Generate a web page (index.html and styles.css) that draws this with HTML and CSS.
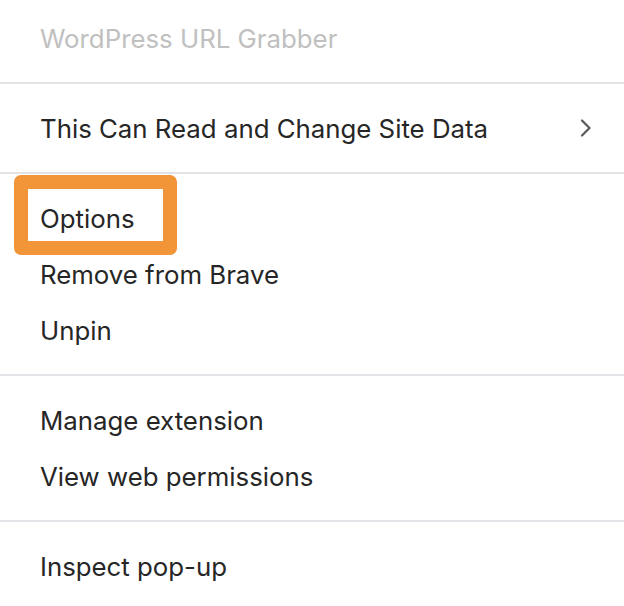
FILE: index.html
```html
<!DOCTYPE html>
<html>
<head>
<meta charset="utf-8">
<link rel="stylesheet" href="styles.css">
</head>
<body>
<div class="menu">
  <div class="row title">WordPress URL Grabber</div>
  <div class="sep"></div>
  <div class="row">
    <span class="label">This Can Read and Change Site Data</span>
    <svg class="chev" width="12" height="18" viewBox="0 0 12 18"><path d="M2 1.5 L9.5 9 L2 16.5" fill="none" stroke="#5a5a5a" stroke-width="2.2" stroke-linecap="round" stroke-linejoin="round"/></svg>
  </div>
  <div class="sep"></div>
  <div class="row highlight">
    <span class="label">Options</span>
    <span class="mark"></span>
  </div>
  <div class="row"><span class="label">Remove from Brave</span></div>
  <div class="row"><span class="label">Unpin</span></div>
  <div class="sep"></div>
  <div class="row"><span class="label">Manage extension</span></div>
  <div class="row"><span class="label">View web permissions</span></div>
  <div class="sep"></div>
  <div class="row"><span class="label">Inspect pop-up</span></div>
</div>
</body>
</html>
```
FILE: styles.css
```css
html, body {
  margin: 0;
  padding: 0;
  background: #ffffff;
}
body {
  font-family: Inter, "Noto Sans", "Liberation Sans", sans-serif;
  font-size: 25.8px;
  color: #262626;
  width: 624px;
  height: 606px;
  overflow: hidden;
}
.menu {
  padding-top: 12px;
  display: flex;
  flex-direction: column;
}
.row {
  position: relative;
  box-sizing: border-box;
  height: 56px;
  display: flex;
  align-items: center;
  justify-content: space-between;
  padding: 0 32px 4px 40px;
}
.title {
  color: #c0c0c0;
}
.sep {
  height: 2px;
  background: #e3e2e7;
  margin: 14px 0 18px;
}
.chev {
  display: block;
}
.mark {
  position: absolute;
  left: 14px;
  top: -17px;
  width: 163px;
  height: 80px;
  box-sizing: border-box;
  border: 14px solid #f29538;
  border-radius: 7px;
}
```
